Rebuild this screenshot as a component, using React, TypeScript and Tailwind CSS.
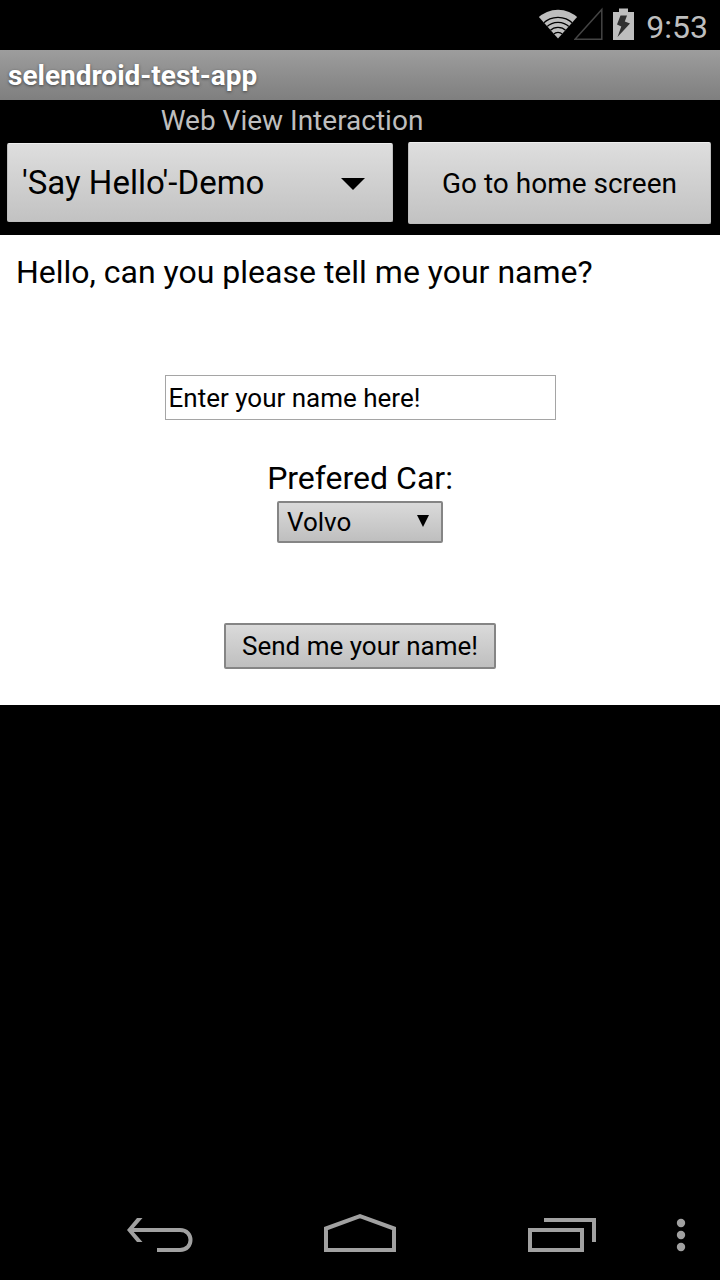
import { useState } from "react";

function StatusBar() {
  return (
    <header className="flex h-[50px] items-center justify-end pr-3 text-[#bebebe]">
      <svg aria-label="Wi-Fi" className="h-10 w-10" viewBox="0 0 40 40" role="img">
        <clipPath id="fan">
          <path d="M20 33.5 -7 3V-9H47V3Z" />
        </clipPath>
        <g clipPath="url(#fan)">
          <circle cx="20" cy="33.5" r="28.8" fill="currentColor" />
          <g fill="none" stroke="#000" strokeWidth="1.3">
            <circle cx="20" cy="33.5" r="21.2" />
            <circle cx="20" cy="33.5" r="16.2" />
            <circle cx="20" cy="33.5" r="11.2" />
            <circle cx="20" cy="33.5" r="6.2" />
          </g>
        </g>
      </svg>
      <svg aria-label="No signal" className="-ml-1 h-10 w-8" viewBox="0 0 32 40" role="img">
        <path d="M1 34.2 27.800 4.500V34.200Z" fill="none" stroke="#444" strokeWidth="1.5" />
      </svg>
      <svg aria-label="Charging" className="ml-1.5 h-10 w-6" viewBox="0 0 24 40" role="img">
        <path d="M1 7H7V3.5H16V7H22V35H1Z" fill="currentColor" />
        <path d="M8.5 10.5H15L12.8 16.5 18 18.500 5.500 32 9.300 21.500 5 19.500Z" fill="#303030" />
      </svg>
      <time className="ml-2.5 pt-1 text-[32px] leading-10">9:53</time>
    </header>
  );
}

function NavBar() {
  return (
    <nav className="flex h-24 pl-[60px] text-[#a1a1a1]">
      <button aria-label="Back" className="flex flex-1 items-center justify-center">
        <svg className="h-12 w-20" viewBox="0 0 80 48" fill="none" stroke="currentColor" strokeWidth="4">
          <path d="M10 22H60C74 22 74 42 60 42H37" />
          <path d="M17 10H22.5L12 22 22.5 34H17L7 22Z" fill="currentColor" stroke="none" />
        </svg>
      </button>
      <button aria-label="Home" className="flex flex-1 items-center justify-center">
        <svg className="h-12 w-20" viewBox="0 0 80 48" fill="none" stroke="currentColor" strokeWidth="4">
          <path d="M6 42V20.5L40 8.200 74 20.500V42Z" />
        </svg>
      </button>
      <button aria-label="Recent apps" className="flex flex-1 items-center justify-center">
        <svg className="h-12 w-20" viewBox="0 0 80 48" fill="none" stroke="currentColor" strokeWidth="4">
          <path d="M10 22H62V42H10ZM24 12H74V34" />
        </svg>
      </button>
      <button aria-label="More options" className="flex w-[60px] items-center pl-4">
        <svg className="h-12 w-3" viewBox="0 0 12 48" fill="currentColor">
          <circle cx="5" cy="15" r="4.2" />
          <circle cx="5" cy="27" r="4.2" />
          <circle cx="5" cy="39" r="4.2" />
        </svg>
      </button>
    </nav>
  );
}

export default function App() {
  const [name, setName] = useState("Enter your name here!");
  return (
    <div className="flex min-h-screen flex-col bg-black font-['Roboto',sans-serif] text-black">
      <StatusBar />
      <h1 className="h-[50px] bg-linear-to-b from-[#9d9d9d] to-[#7f7f7f] px-2 text-[28px] leading-[52px] font-bold text-white [text-shadow:0_1px_3px_#444]">
        selendroid-test-app
      </h1>
      <section className="h-[135px]">
        <h2 className="pr-[136px] text-center text-[28px] leading-[42px] text-[#bebebe]">
          Web View Interaction
        </h2>
        <div className="grid grid-cols-[386fr_303fr] items-start gap-[15px] pr-[9px] pl-[7px]">
          <div className="relative pt-px">
            <select
              aria-label="Demo page"
              className="h-[79px] w-full appearance-none rounded-xs border border-[#bdbdbd] border-t-[#eee] bg-linear-to-b from-[#dedede] to-[#c2c2c2] px-3.5 text-[33px]"
            >
              <option>'Say Hello'-Demo</option>
            </select>
            <svg className="pointer-events-none absolute top-9 right-7 h-3 w-6" viewBox="0 0 24 12">
              <path d="M0 0H24L12 12Z" />
            </svg>
          </div>
          <button className="h-[82px] rounded-xs border border-[#bdbdbd] border-t-[#eee] bg-linear-to-b from-[#dedede] to-[#c2c2c2] pt-0.5 text-[28px]">
            Go to home screen
          </button>
        </div>
      </section>
      <main className="flex flex-col bg-white px-4 pt-4 pb-9">
        <p className="text-[32px] leading-[42px]">Hello, can you please tell me your name?</p>
        <form className="flex flex-col items-center pt-[82px]" onSubmit={(e) => e.preventDefault()}>
          <input
            aria-label="Your name"
            className="h-[45px] w-[391px] border border-[#a5a5a5] px-[3px] text-[26px]"
            value={name}
            onChange={(e) => setName(e.target.value)}
          />
          <label htmlFor="car" className="mt-9 text-[32px] leading-[45px]">
            Prefered Car:
          </label>
          <div className="relative">
            <select
              id="car"
              className="h-[42px] w-[166px] appearance-none rounded-xs border-2 border-[#858585] bg-linear-to-b from-[#dadada] to-[#bfbfbf] px-2 text-[26px] leading-8"
            >
              <option>Volvo</option>
            </select>
            <svg className="pointer-events-none absolute top-3.5 right-3.5 h-3 w-3" viewBox="0 0 12 12">
              <path d="M0 0H12L6 12Z" />
            </svg>
          </div>
          <button
            type="submit"
            className="mt-20 h-[46px] w-[272px] rounded-xs border-2 border-[#858585] bg-linear-to-b from-[#dadada] to-[#bfbfbf] text-[26px]"
          >
            Send me your name!
          </button>
        </form>
      </main>
      <div className="flex-1" />
      <NavBar />
    </div>
  );
}
